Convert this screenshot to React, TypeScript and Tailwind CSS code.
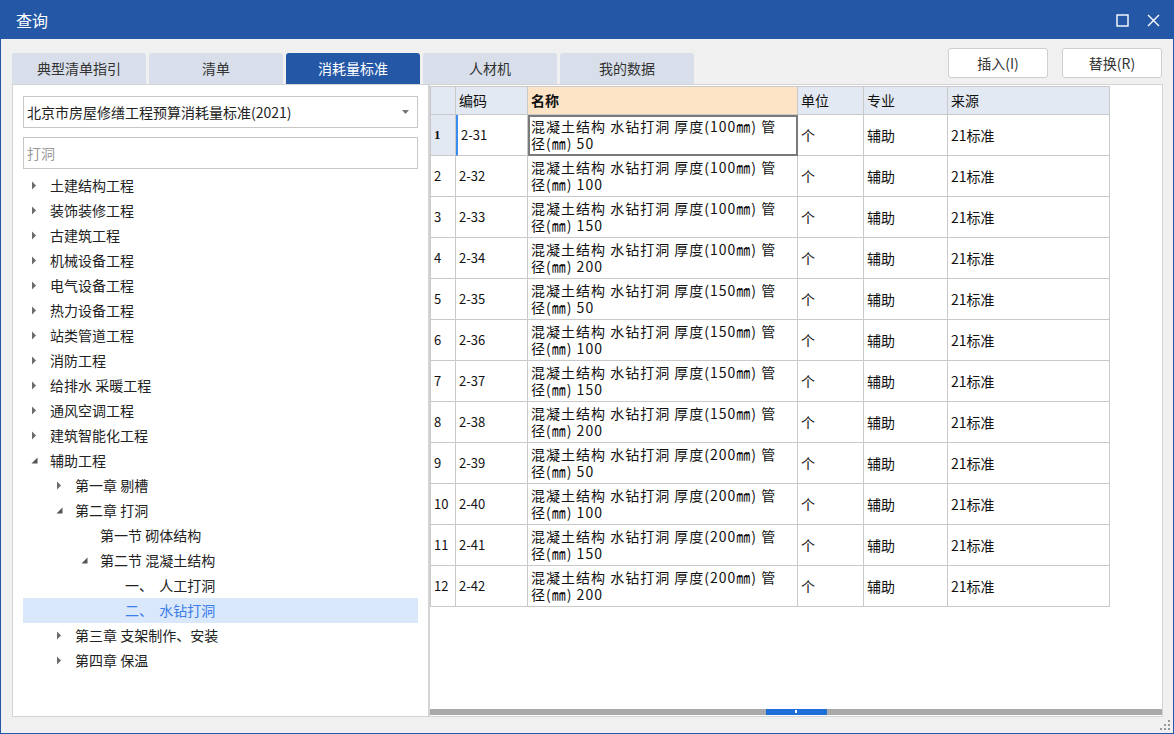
import React from "react";

const FONT = { fontFamily: '"Noto Sans CJK SC", "Noto Sans", sans-serif' };

const tabs = ["典型清单指引", "清单", "消耗量标准", "人材机", "我的数据"];

type Node = { label: string; level: number; arrow: "closed" | "open" | "none"; selected?: boolean };

const tree: Node[] = [
    { label: "土建结构工程", level: 0, arrow: "closed" },
    { label: "装饰装修工程", level: 0, arrow: "closed" },
    { label: "古建筑工程", level: 0, arrow: "closed" },
    { label: "机械设备工程", level: 0, arrow: "closed" },
    { label: "电气设备工程", level: 0, arrow: "closed" },
    { label: "热力设备工程", level: 0, arrow: "closed" },
    { label: "站类管道工程", level: 0, arrow: "closed" },
    { label: "消防工程", level: 0, arrow: "closed" },
    { label: "给排水 采暖工程", level: 0, arrow: "closed" },
    { label: "通风空调工程", level: 0, arrow: "closed" },
    { label: "建筑智能化工程", level: 0, arrow: "closed" },
    { label: "辅助工程", level: 0, arrow: "open" },
    { label: "第一章 剔槽", level: 1, arrow: "closed" },
    { label: "第二章 打洞", level: 1, arrow: "open" },
    { label: "第一节 砌体结构", level: 2, arrow: "none" },
    { label: "第二节 混凝土结构", level: 2, arrow: "open" },
    { label: "一、  人工打洞", level: 3, arrow: "none" },
    { label: "二、  水钻打洞", level: 3, arrow: "none", selected: true },
    { label: "第三章 支架制作、安装", level: 1, arrow: "closed" },
    { label: "第四章 保温", level: 1, arrow: "closed" },
];

const rows = [
    ["2-31", "100", "50"],
    ["2-32", "100", "100"],
    ["2-33", "100", "150"],
    ["2-34", "100", "200"],
    ["2-35", "150", "50"],
    ["2-36", "150", "100"],
    ["2-37", "150", "150"],
    ["2-38", "150", "200"],
    ["2-39", "200", "50"],
    ["2-40", "200", "100"],
    ["2-41", "200", "150"],
    ["2-42", "200", "200"],
];

function Arrow({ kind }: { kind: Node["arrow"] }) {
    if (kind === "none") return <span className="w-[19px] shrink-0" />;
    if (kind === "closed")
        return (
            <span className="w-[19px] shrink-0 flex items-center">
                <svg width="6" height="9" viewBox="0 0 6 9">
                    <path d="M1 0.5 L5 4.5 L1 8.5 Z" fill="#6b6b6b" />
                </svg>
            </span>
        );
    return (
        <span className="w-[19px] shrink-0 flex items-center">
            <svg width="7" height="7" viewBox="0 0 7 7">
                <path d="M6.5 0.5 L6.5 6.5 L0.5 6.5 Z" fill="#555" />
            </svg>
        </span>
    );
}

const headerCls = "border-r border-b border-[#c9c9c9] px-[3px] flex items-center h-[28px]";
const cellCls = "border-r border-b border-[#c9c9c9] px-[3px] flex items-center";

export default function App() {
    return (
        <div className="w-[1174px] h-[734px] bg-[#f0f0f0] flex flex-col overflow-hidden border border-[#2557a7]" style={FONT}>
            {/* title bar */}
            <div className="h-[38px] shrink-0 bg-[#2557a7] flex items-center pl-[15px] pr-[13px] text-white">
                <span className="text-[16px]">查询</span>
                <div className="ml-auto flex items-center gap-[18px]">
                    <svg width="13" height="13" viewBox="0 0 13 13">
                        <rect x="1" y="1" width="11" height="11" fill="none" stroke="white" strokeWidth="1.4" />
                    </svg>
                    <svg width="13" height="13" viewBox="0 0 13 13">
                        <path d="M1 1 L12 12 M12 1 L1 12" stroke="white" strokeWidth="1.4" />
                    </svg>
                </div>
            </div>

            {/* tabs + buttons */}
            <div className="h-[45px] shrink-0 flex pl-[11px] pr-[11px]">
                <div className="flex items-end gap-[3px]">
                    {tabs.map((t, i) => (
                        <div
                            key={t}
                            className={
                                "h-[31px] w-[134px] rounded-t-[3px] flex items-center justify-center text-[14px] " +
                                (i === 2 ? "bg-[#2557a7] text-white" : "bg-[#d8dfea] text-[#333]")
                            }
                        >
                            {t}
                        </div>
                    ))}
                </div>
                <div className="ml-auto pt-[9px] flex gap-[14px] items-start">
                    <button className="w-[100px] h-[30px] bg-white border border-[#cfcfcf] rounded-[3px] text-[14px] text-[#333]">插入(I)</button>
                    <button className="w-[100px] h-[30px] bg-white border border-[#cfcfcf] rounded-[3px] text-[14px] text-[#333]">替换(R)</button>
                </div>
            </div>

            {/* main */}
            <div className="h-[633px] shrink-0 flex pl-[11px]">
                {/* left panel */}
                <div className="w-[417px] bg-white border border-[#d4d4d4] flex flex-col pt-[11px] px-[10px]">
                    <div className="h-[32px] border border-[#c6c6c6] flex items-center pl-[3px] pr-[8px] text-[14px] text-[#222]">
                        <span>北京市房屋修缮工程预算消耗量标准(2021)</span>
                        <svg className="ml-auto" width="7" height="4" viewBox="0 0 7 4">
                            <path d="M0 0 L7 0 L3.5 4 Z" fill="#777" />
                        </svg>
                    </div>
                    <div className="h-[32px] mt-[9px] border border-[#c6c6c6] flex items-center pl-[3px] text-[14px] text-[#9a9a9a]">打洞</div>
                    <div className="mt-[4px] flex flex-col">
                        {tree.map((n, i) => (
                            <div
                                key={i}
                                className={
                                    "h-[25px] flex items-center text-[14px] whitespace-pre " +
                                    (n.selected ? "bg-[#d9e8fb] text-[#3b7de9]" : "text-[#222]")
                                }
                                style={{ paddingLeft: 8 + n.level * 25 }}
                            >
                                <Arrow kind={n.arrow} />
                                <span>{n.label}</span>
                            </div>
                        ))}
                    </div>
                </div>

                {/* right panel */}
                <div className="w-[734px] bg-white border border-[#d4d4d4] flex flex-col">
                    <div className="flex-1 pt-[1px]">
                        <div className="inline-flex flex-col border-l border-t border-[#c9c9c9] text-[13px] text-[#111]">
                            <div className="flex bg-[#e3e9f2] text-[14px]">
                                <div className={headerCls + " w-[25px]"} />
                                <div className={headerCls + " w-[72px]"}>编码</div>
                                <div className={headerCls + " w-[270px] bg-[#fde4c7] font-bold"}>名称</div>
                                <div className={headerCls + " w-[66px]"}>单位</div>
                                <div className={headerCls + " w-[84px]"}>专业</div>
                                <div className={headerCls + " w-[162px]"}>来源</div>
                            </div>
                            {rows.map((r, i) => (
                                <div key={r[0]} className="flex h-[41px]">
                                    <div
                                        className={
                                            cellCls +
                                            " w-[25px] px-[2px] " +
                                            (i === 0 ? "bg-[#e3e9f2] font-bold" : "")
                                        }
                                        style={i === 0 ? { fontFamily: '"Liberation Serif", serif' } : undefined}
                                    >
                                        {i + 1}
                                    </div>
                                    <div className={cellCls + " w-[72px] " + (i === 0 ? "border-l-2 border-l-[#3b8cf0]" : "")}>{r[0]}</div>
                                    <div
                                        className={
                                            cellCls +
                                            " w-[270px] text-[14px] tracking-[1px] " +
                                            (i === 0 ? "outline outline-2 -outline-offset-2 outline-[#7a7a7a]" : "")
                                        }
                                    >
                                        <div className="flex flex-col whitespace-pre">
                                            <span className="h-[17px] leading-[17px]">混凝土结构 水钻打洞 厚度({r[1]}㎜) 管</span>
                                            <span className="h-[17px] leading-[17px]">径(㎜) {r[2]}</span>
                                        </div>
                                    </div>
                                    <div className={cellCls + " w-[66px] text-[14px]"}>个</div>
                                    <div className={cellCls + " w-[84px] text-[14px]"}>辅助</div>
                                    <div className={cellCls + " w-[162px] text-[14px]"}>21标准</div>
                                </div>
                            ))}
                        </div>
                    </div>
                    {/* horizontal scrollbar */}
                    <div className="h-[6px] bg-[#a9a9a9] flex justify-center mb-[1px]">
                        <div className="w-[61px] h-[6px] bg-[#1f6fd8] flex justify-center items-start">
                            <div className="w-[2px] h-[3px] bg-white mt-[1px]" />
                        </div>
                    </div>
                </div>
            </div>

            {/* bottom strip */}
            <div className="flex-1 flex justify-end items-end pr-[3px] pb-[3px]">
                <svg width="10" height="10" viewBox="0 0 10 10">
                    <rect x="8" y="0" width="2" height="2" fill="#999" />
                    <rect x="4" y="4" width="2" height="2" fill="#999" />
                    <rect x="8" y="4" width="2" height="2" fill="#999" />
                    <rect x="0" y="8" width="2" height="2" fill="#999" />
                    <rect x="4" y="8" width="2" height="2" fill="#999" />
                    <rect x="8" y="8" width="2" height="2" fill="#999" />
                </svg>
            </div>
        </div>
    );
}
